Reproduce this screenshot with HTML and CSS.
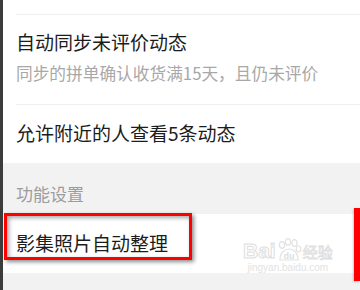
FILE: index.html
```html
<!DOCTYPE html>
<html lang="zh">
<head>
<meta charset="utf-8">
<link rel="stylesheet" href="styles.css">
</head>
<body>
<div class="screen">
  <div class="strip"></div>
  <div class="main">
    <div class="top"></div>
    <div class="row row-two">
      <div class="title">自动同步未评价动态</div>
      <div class="sub">同步的拼单确认收货满15天，且仍未评价</div>
    </div>
    <div class="divider"></div>
    <div class="row row-one">
      <div class="title">允许附近的人查看5条动态</div>
    </div>
    <div class="section">功能设置</div>
    <div class="row row-last">
      <div class="title">影集照片自动整理</div>
    </div>
    <div class="bottom"></div>
  </div>
  <div class="mark-box"></div>
  <div class="mark-bar"></div>
  <div class="watermark">
    <div class="wm-line">
      <span class="wm-bai">Bai</span>
      <svg class="wm-paw" width="26" height="26" viewBox="0 0 26 26">
        <g fill="none" stroke="#e2e2e2" stroke-width="1.2">
          <ellipse cx="6" cy="7" rx="2.6" ry="3.3"/>
          <ellipse cx="12" cy="4" rx="2.6" ry="3.3"/>
          <ellipse cx="18.5" cy="5" rx="2.6" ry="3.3"/>
          <ellipse cx="22.5" cy="11" rx="2.3" ry="3"/>
          <path d="M4 22 C4 14 9 11 13 11 C18 11 22 15 22 22 Z"/>
        </g>
        <text x="13" y="20.5" text-anchor="middle" font-size="9" font-family="Liberation Sans" fill="#dedede" font-weight="bold">du</text>
      </svg>
      <span class="wm-cn">经验</span>
    </div>
    <div class="wm-url">jingyan.baidu.com</div>
  </div>
</div>
</body>
</html>
```
FILE: styles.css
```css
* { box-sizing: border-box; }
html, body {
  margin: 0;
  padding: 0;
  background: #ffffff;
}
body {
  width: 360px;
  height: 290px;
  overflow: hidden;
  font-family: "Noto Sans CJK SC", "Noto Sans", sans-serif;
}
.screen {
  position: relative;
  display: flex;
  width: 360px;
  height: 290px;
}
.strip {
  width: 3px;
  flex: none;
  background: #3c3c3c;
}
.main {
  flex: 1;
  display: flex;
  flex-direction: column;
}
.top {
  height: 15px;
  flex: none;
  border-bottom: 1px solid #efefef;
  margin-left: 13px;
  background: #fff;
}
.divider {
  height: 1px;
  flex: none;
  margin-left: 13px;
  background: #efefef;
}
.row {
  background: #fff;
  padding-left: 13px;
  flex: none;
}
.row-two {
  height: 89px;
  padding-top: 15px;
}
.row-one {
  height: 58px;
  padding-top: 16px;
}
.row-last {
  height: 59px;
  padding-top: 17px;
}
.title {
  font-size: 19px;
  line-height: 24px;
  color: #1c1c1c;
}
.sub {
  margin-top: 9px;
  font-size: 16.7px;
  line-height: 20px;
  color: #a8a8a8;
}
.section {
  height: 51px;
  flex: none;
  background: #f2f2f2;
  padding-left: 13px;
  padding-top: 21px;
  font-size: 17px;
  line-height: 20px;
  color: #9c9c9c;
}
.bottom {
  flex: 1;
  background: #f2f2f2;
}
.mark-box {
  position: absolute;
  left: 4px;
  top: 213px;
  width: 188px;
  height: 47px;
  border: 3px solid #ff0000;
  box-shadow: 2px 2px 4px rgba(0, 0, 0, 0.45), inset 2px 2px 4px rgba(0, 0, 0, 0.35);
}
.mark-bar {
  position: absolute;
  left: 354px;
  top: 208px;
  width: 6px;
  height: 73px;
  background: #ff0000;
  box-shadow: -1px 1px 2px rgba(0, 0, 0, 0.2);
}
.watermark {
  position: absolute;
  left: 243px;
  top: 236px;
  display: flex;
  flex-direction: column;
  align-items: center;
  white-space: nowrap;
}
.wm-line {
  display: flex;
  align-items: flex-end;
  height: 26px;
}
.wm-bai {
  font-family: "Liberation Sans", sans-serif;
  font-weight: bold;
  font-size: 21px;
  line-height: 22px;
  color: #ffffff;
  -webkit-text-stroke: 1px #dedede;
}
.wm-paw {
  display: block;
  flex: none;
  margin-bottom: -2px;
}
.wm-cn {
  font-size: 15px;
  line-height: 20px;
  color: #ffffff;
  -webkit-text-stroke: 0.8px #dedede;
  margin-left: 1px;
}
.wm-url {
  font-family: "Liberation Sans", sans-serif;
  font-size: 10px;
  line-height: 10px;
  color: #e2e2e2;
  margin-top: 1px;
}
```
